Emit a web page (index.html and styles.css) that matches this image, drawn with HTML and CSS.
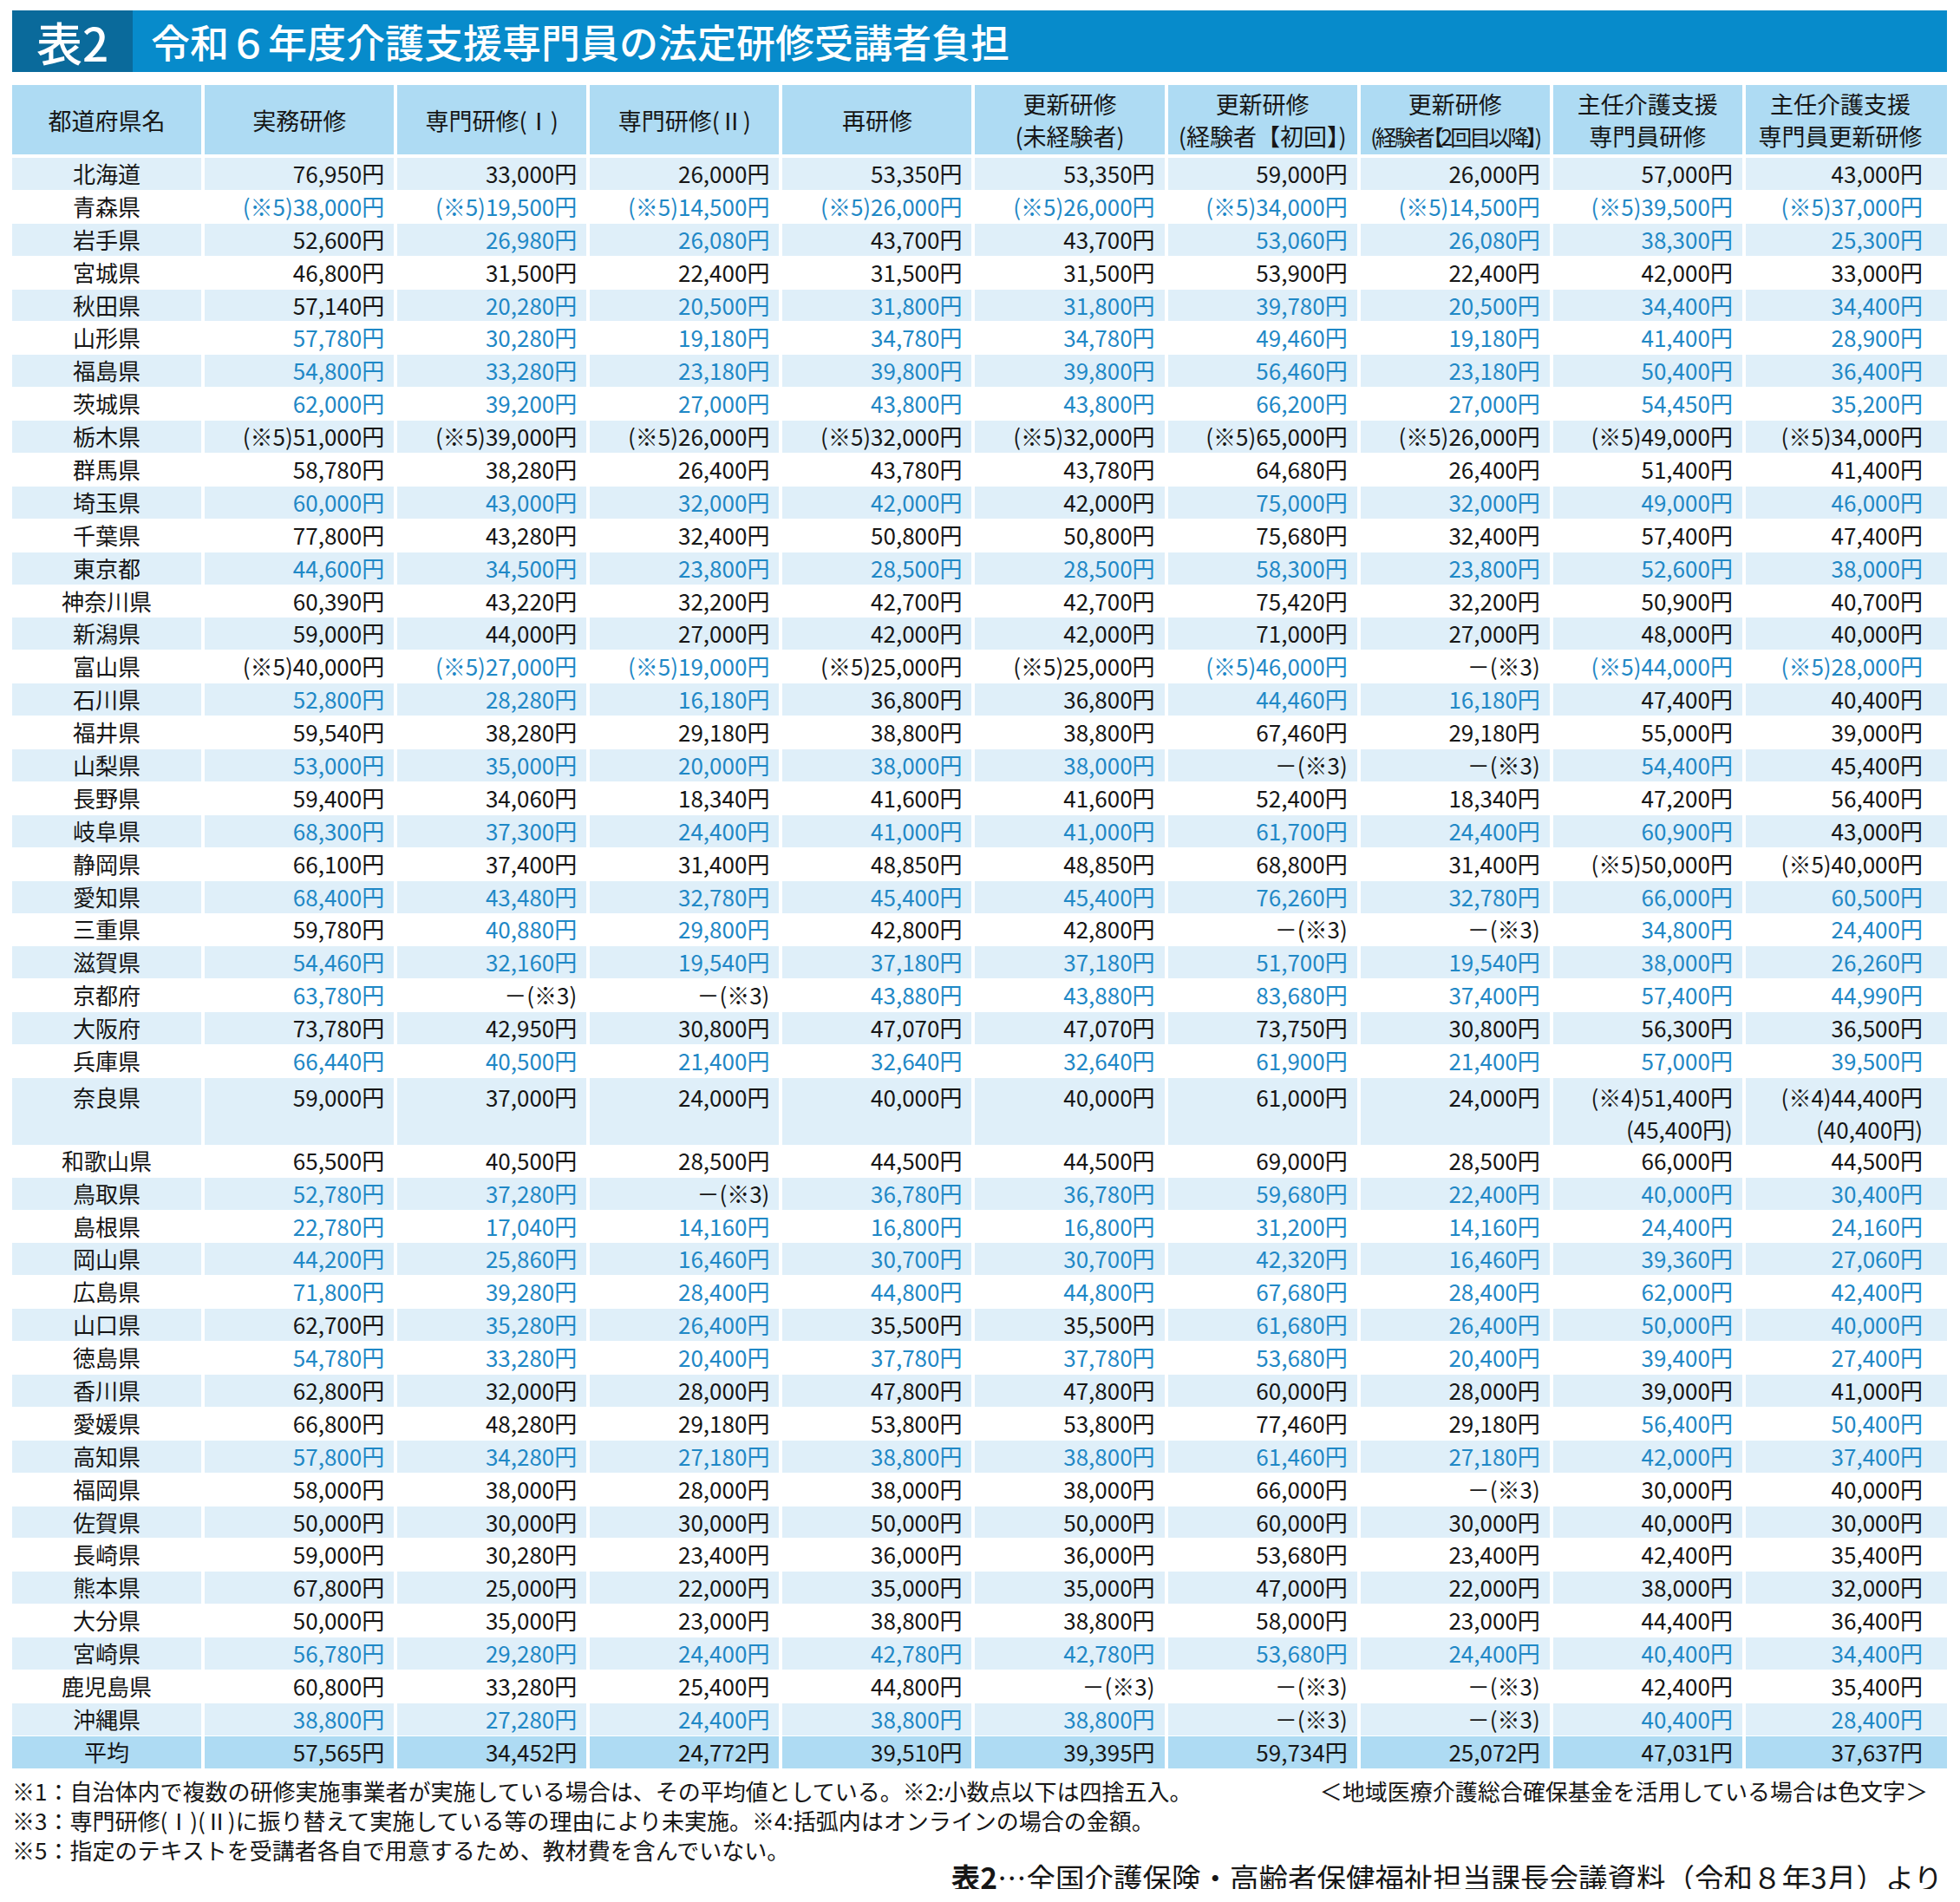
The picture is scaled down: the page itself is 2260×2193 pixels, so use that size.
FILE: index.html
```html
<!DOCTYPE html>
<html lang="ja">
<head>
<meta charset="utf-8">
<title>表2 令和６年度介護支援専門員の法定研修受講者負担</title>
<link rel="stylesheet" href="styles.css">
</head>
<body>
<div class="page">
  <div class="title">
    <div class="title-no">表2</div>
    <div class="title-text">令和６年度介護支援専門員の法定研修受講者負担</div>
  </div>

  <div class="table">
    <div class="hd">
      <div class="hc"><p>都道府県名</p></div>
      <div class="hc"><p>実務研修</p></div>
      <div class="hc"><p>専門研修(Ⅰ)</p></div>
      <div class="hc"><p>専門研修(Ⅱ)</p></div>
      <div class="hc"><p>再研修</p></div>
      <div class="hc"><p>更新研修<br>(未経験者)</p></div>
      <div class="hc"><p>更新研修<br>(経験者【初回】)</p></div>
      <div class="hc"><p>更新研修<br><span class="tight">(経験者【2回目以降】)</span></p></div>
      <div class="hc"><p>主任介護支援<br>専門員研修</p></div>
      <div class="hc"><p>主任介護支援<br>専門員更新研修</p></div>
    </div>

    <div class="r band"><span>北海道</span><span>76,950円</span><span>33,000円</span><span>26,000円</span><span>53,350円</span><span>53,350円</span><span>59,000円</span><span>26,000円</span><span>57,000円</span><span>43,000円</span></div>
    <div class="r blue"><span>青森県</span><span>(※5)38,000円</span><span>(※5)19,500円</span><span>(※5)14,500円</span><span>(※5)26,000円</span><span>(※5)26,000円</span><span>(※5)34,000円</span><span>(※5)14,500円</span><span>(※5)39,500円</span><span>(※5)37,000円</span></div>
    <div class="r band"><span>岩手県</span><span>52,600円</span><span class="b">26,980円</span><span class="b">26,080円</span><span>43,700円</span><span>43,700円</span><span class="b">53,060円</span><span class="b">26,080円</span><span class="b">38,300円</span><span class="b">25,300円</span></div>
    <div class="r"><span>宮城県</span><span>46,800円</span><span>31,500円</span><span>22,400円</span><span>31,500円</span><span>31,500円</span><span>53,900円</span><span>22,400円</span><span>42,000円</span><span>33,000円</span></div>
    <div class="r band"><span>秋田県</span><span>57,140円</span><span class="b">20,280円</span><span class="b">20,500円</span><span class="b">31,800円</span><span class="b">31,800円</span><span class="b">39,780円</span><span class="b">20,500円</span><span class="b">34,400円</span><span class="b">34,400円</span></div>
    <div class="r blue"><span>山形県</span><span>57,780円</span><span>30,280円</span><span>19,180円</span><span>34,780円</span><span>34,780円</span><span>49,460円</span><span>19,180円</span><span>41,400円</span><span>28,900円</span></div>
    <div class="r band blue"><span>福島県</span><span>54,800円</span><span>33,280円</span><span>23,180円</span><span>39,800円</span><span>39,800円</span><span>56,460円</span><span>23,180円</span><span>50,400円</span><span>36,400円</span></div>
    <div class="r blue"><span>茨城県</span><span>62,000円</span><span>39,200円</span><span>27,000円</span><span>43,800円</span><span>43,800円</span><span>66,200円</span><span>27,000円</span><span>54,450円</span><span>35,200円</span></div>
    <div class="r band"><span>栃木県</span><span>(※5)51,000円</span><span>(※5)39,000円</span><span>(※5)26,000円</span><span>(※5)32,000円</span><span>(※5)32,000円</span><span>(※5)65,000円</span><span>(※5)26,000円</span><span>(※5)49,000円</span><span>(※5)34,000円</span></div>
    <div class="r"><span>群馬県</span><span>58,780円</span><span>38,280円</span><span>26,400円</span><span>43,780円</span><span>43,780円</span><span>64,680円</span><span>26,400円</span><span>51,400円</span><span>41,400円</span></div>
    <div class="r band blue"><span>埼玉県</span><span>60,000円</span><span>43,000円</span><span>32,000円</span><span>42,000円</span><span class="k">42,000円</span><span>75,000円</span><span>32,000円</span><span>49,000円</span><span>46,000円</span></div>
    <div class="r"><span>千葉県</span><span>77,800円</span><span>43,280円</span><span>32,400円</span><span>50,800円</span><span>50,800円</span><span>75,680円</span><span>32,400円</span><span>57,400円</span><span>47,400円</span></div>
    <div class="r band blue"><span>東京都</span><span>44,600円</span><span>34,500円</span><span>23,800円</span><span>28,500円</span><span>28,500円</span><span>58,300円</span><span>23,800円</span><span>52,600円</span><span>38,000円</span></div>
    <div class="r"><span>神奈川県</span><span>60,390円</span><span>43,220円</span><span>32,200円</span><span>42,700円</span><span>42,700円</span><span>75,420円</span><span>32,200円</span><span>50,900円</span><span>40,700円</span></div>
    <div class="r band"><span>新潟県</span><span>59,000円</span><span>44,000円</span><span>27,000円</span><span>42,000円</span><span>42,000円</span><span>71,000円</span><span>27,000円</span><span>48,000円</span><span>40,000円</span></div>
    <div class="r"><span>富山県</span><span>(※5)40,000円</span><span class="b">(※5)27,000円</span><span class="b">(※5)19,000円</span><span>(※5)25,000円</span><span>(※5)25,000円</span><span class="b">(※5)46,000円</span><span>－(※3)</span><span class="b">(※5)44,000円</span><span class="b">(※5)28,000円</span></div>
    <div class="r band"><span>石川県</span><span class="b">52,800円</span><span class="b">28,280円</span><span class="b">16,180円</span><span>36,800円</span><span>36,800円</span><span class="b">44,460円</span><span class="b">16,180円</span><span>47,400円</span><span>40,400円</span></div>
    <div class="r"><span>福井県</span><span>59,540円</span><span>38,280円</span><span>29,180円</span><span>38,800円</span><span>38,800円</span><span>67,460円</span><span>29,180円</span><span>55,000円</span><span>39,000円</span></div>
    <div class="r band"><span>山梨県</span><span class="b">53,000円</span><span class="b">35,000円</span><span class="b">20,000円</span><span class="b">38,000円</span><span class="b">38,000円</span><span>－(※3)</span><span>－(※3)</span><span class="b">54,400円</span><span>45,400円</span></div>
    <div class="r"><span>長野県</span><span>59,400円</span><span>34,060円</span><span>18,340円</span><span>41,600円</span><span>41,600円</span><span>52,400円</span><span>18,340円</span><span>47,200円</span><span>56,400円</span></div>
    <div class="r band blue"><span>岐阜県</span><span>68,300円</span><span>37,300円</span><span>24,400円</span><span>41,000円</span><span>41,000円</span><span>61,700円</span><span>24,400円</span><span>60,900円</span><span class="k">43,000円</span></div>
    <div class="r"><span>静岡県</span><span>66,100円</span><span>37,400円</span><span>31,400円</span><span>48,850円</span><span>48,850円</span><span>68,800円</span><span>31,400円</span><span>(※5)50,000円</span><span>(※5)40,000円</span></div>
    <div class="r band blue"><span>愛知県</span><span>68,400円</span><span>43,480円</span><span>32,780円</span><span>45,400円</span><span>45,400円</span><span>76,260円</span><span>32,780円</span><span>66,000円</span><span>60,500円</span></div>
    <div class="r"><span>三重県</span><span>59,780円</span><span class="b">40,880円</span><span class="b">29,800円</span><span>42,800円</span><span>42,800円</span><span>－(※3)</span><span>－(※3)</span><span class="b">34,800円</span><span class="b">24,400円</span></div>
    <div class="r band blue"><span>滋賀県</span><span>54,460円</span><span>32,160円</span><span>19,540円</span><span>37,180円</span><span>37,180円</span><span>51,700円</span><span>19,540円</span><span>38,000円</span><span>26,260円</span></div>
    <div class="r blue"><span>京都府</span><span>63,780円</span><span class="k">－(※3)</span><span class="k">－(※3)</span><span>43,880円</span><span>43,880円</span><span>83,680円</span><span>37,400円</span><span>57,400円</span><span>44,990円</span></div>
    <div class="r band"><span>大阪府</span><span>73,780円</span><span>42,950円</span><span>30,800円</span><span>47,070円</span><span>47,070円</span><span>73,750円</span><span>30,800円</span><span>56,300円</span><span>36,500円</span></div>
    <div class="r blue"><span>兵庫県</span><span>66,440円</span><span>40,500円</span><span>21,400円</span><span>32,640円</span><span>32,640円</span><span>61,900円</span><span>21,400円</span><span>57,000円</span><span>39,500円</span></div>
    <div class="r band tall"><span>奈良県</span><span>59,000円</span><span>37,000円</span><span>24,000円</span><span>40,000円</span><span>40,000円</span><span>61,000円</span><span>24,000円</span><span>(※4)51,400円<br>(45,400円)</span><span>(※4)44,400円<br>(40,400円)</span></div>
    <div class="r"><span>和歌山県</span><span>65,500円</span><span>40,500円</span><span>28,500円</span><span>44,500円</span><span>44,500円</span><span>69,000円</span><span>28,500円</span><span>66,000円</span><span>44,500円</span></div>
    <div class="r band blue"><span>鳥取県</span><span>52,780円</span><span>37,280円</span><span class="k">－(※3)</span><span>36,780円</span><span>36,780円</span><span>59,680円</span><span>22,400円</span><span>40,000円</span><span>30,400円</span></div>
    <div class="r blue"><span>島根県</span><span>22,780円</span><span>17,040円</span><span>14,160円</span><span>16,800円</span><span>16,800円</span><span>31,200円</span><span>14,160円</span><span>24,400円</span><span>24,160円</span></div>
    <div class="r band blue"><span>岡山県</span><span>44,200円</span><span>25,860円</span><span>16,460円</span><span>30,700円</span><span>30,700円</span><span>42,320円</span><span>16,460円</span><span>39,360円</span><span>27,060円</span></div>
    <div class="r blue"><span>広島県</span><span>71,800円</span><span>39,280円</span><span>28,400円</span><span>44,800円</span><span>44,800円</span><span>67,680円</span><span>28,400円</span><span>62,000円</span><span>42,400円</span></div>
    <div class="r band"><span>山口県</span><span>62,700円</span><span class="b">35,280円</span><span class="b">26,400円</span><span>35,500円</span><span>35,500円</span><span class="b">61,680円</span><span class="b">26,400円</span><span class="b">50,000円</span><span class="b">40,000円</span></div>
    <div class="r blue"><span>徳島県</span><span>54,780円</span><span>33,280円</span><span>20,400円</span><span>37,780円</span><span>37,780円</span><span>53,680円</span><span>20,400円</span><span>39,400円</span><span>27,400円</span></div>
    <div class="r band"><span>香川県</span><span>62,800円</span><span>32,000円</span><span>28,000円</span><span>47,800円</span><span>47,800円</span><span>60,000円</span><span>28,000円</span><span>39,000円</span><span>41,000円</span></div>
    <div class="r"><span>愛媛県</span><span>66,800円</span><span>48,280円</span><span>29,180円</span><span>53,800円</span><span>53,800円</span><span>77,460円</span><span>29,180円</span><span class="b">56,400円</span><span class="b">50,400円</span></div>
    <div class="r band blue"><span>高知県</span><span>57,800円</span><span>34,280円</span><span>27,180円</span><span>38,800円</span><span>38,800円</span><span>61,460円</span><span>27,180円</span><span>42,000円</span><span>37,400円</span></div>
    <div class="r"><span>福岡県</span><span>58,000円</span><span>38,000円</span><span>28,000円</span><span>38,000円</span><span>38,000円</span><span>66,000円</span><span>－(※3)</span><span>30,000円</span><span>40,000円</span></div>
    <div class="r band"><span>佐賀県</span><span>50,000円</span><span>30,000円</span><span>30,000円</span><span>50,000円</span><span>50,000円</span><span>60,000円</span><span>30,000円</span><span>40,000円</span><span>30,000円</span></div>
    <div class="r"><span>長崎県</span><span>59,000円</span><span>30,280円</span><span>23,400円</span><span>36,000円</span><span>36,000円</span><span>53,680円</span><span>23,400円</span><span>42,400円</span><span>35,400円</span></div>
    <div class="r band"><span>熊本県</span><span>67,800円</span><span>25,000円</span><span>22,000円</span><span>35,000円</span><span>35,000円</span><span>47,000円</span><span>22,000円</span><span>38,000円</span><span>32,000円</span></div>
    <div class="r"><span>大分県</span><span>50,000円</span><span>35,000円</span><span>23,000円</span><span>38,800円</span><span>38,800円</span><span>58,000円</span><span>23,000円</span><span>44,400円</span><span>36,400円</span></div>
    <div class="r band blue"><span>宮崎県</span><span>56,780円</span><span>29,280円</span><span>24,400円</span><span>42,780円</span><span>42,780円</span><span>53,680円</span><span>24,400円</span><span>40,400円</span><span>34,400円</span></div>
    <div class="r"><span>鹿児島県</span><span>60,800円</span><span>33,280円</span><span>25,400円</span><span>44,800円</span><span>－(※3)</span><span>－(※3)</span><span>－(※3)</span><span>42,400円</span><span>35,400円</span></div>
    <div class="r band blue"><span>沖縄県</span><span>38,800円</span><span>27,280円</span><span>24,400円</span><span>38,800円</span><span>38,800円</span><span class="k">－(※3)</span><span class="k">－(※3)</span><span>40,400円</span><span>28,400円</span></div>
    <div class="r avg"><span>平均</span><span>57,565円</span><span>34,452円</span><span>24,772円</span><span>39,510円</span><span>39,395円</span><span>59,734円</span><span>25,072円</span><span>47,031円</span><span>37,637円</span></div>
  </div>

  <div class="notes">
    <div class="note-line">
      <span>※1：自治体内で複数の研修実施事業者が実施している場合は、その平均値としている。※2:小数点以下は四捨五入。</span>
      <span class="legend">＜地域医療介護総合確保基金を活用している場合は色文字＞</span>
    </div>
    <div class="note-line">※3：専門研修(Ⅰ)(Ⅱ)に振り替えて実施している等の理由により未実施。※4:括弧内はオンラインの場合の金額。</div>
    <div class="note-line">※5：指定のテキストを受講者各自で用意するため、教材費を含んでいない。</div>
  </div>

  <div class="source"><b>表2</b>…全国介護保険・高齢者保健福祉担当課長会議資料（令和８年3月）より</div>
</div>
</body>
</html>
```

FILE: styles.css
```css
* {
  box-sizing: border-box;
}

body {
  margin: 0;
  padding: 12px 15px 0 14px;
  background: #ffffff;
  color: #161616;
  font-family: "Noto Sans CJK JP", "Noto Sans", sans-serif;
}

.page {
  width: 2231px;
}

/* ---------- title bar ---------- */
.title {
  display: flex;
  height: 71px;
  background: #078bcb;
  color: #ffffff;
}

.title-no {
  width: 139px;
  background: #0a6a9b;
  display: flex;
  align-items: center;
  justify-content: center;
  font-size: 53px;
  font-weight: 500;
}

.title-text {
  display: flex;
  align-items: center;
  padding-left: 21px;
  font-size: 45px;
  font-weight: 500;
}

/* ---------- table ---------- */
.table {
  margin-top: 15px;
  display: flex;
  flex-direction: column;
  gap: 1px;
}

.hd,
.r {
  display: grid;
  grid-template-columns: repeat(9, minmax(0, 218fr)) minmax(0, 232fr);
  column-gap: 4px;
}

.hd {
  height: 80px;
  margin-bottom: 3px;
}

.hc {
  background: #aedbf3;
  display: flex;
  align-items: center;
  justify-content: center;
  overflow: hidden;
}

.hc p {
  margin: 0;
  text-align: center;
  font-size: 27px;
  line-height: 37px;
  white-space: nowrap;
}

.hc:last-child p {
  padding-right: 14px;
}

.hc .tight {
  font-size: 25px;
  font-feature-settings: "palt";
  letter-spacing: -3px;
}

.r {
  height: 36.9px;
}

.r span {
  font-size: 26px;
  line-height: 36.9px;
  text-align: right;
  padding-right: 11px;
  white-space: nowrap;
}

.r span:first-child {
  text-align: center;
  padding-right: 0;
}

.r span:last-child {
  padding-right: 28px;
}

.band span {
  background: #dfeff9;
}

.avg span {
  background: #aedbf3;
}

.tall {
  height: 75.8px;
}

.tall span {
  padding-top: 3px;
  line-height: 37px;
}

.blue span,
.r span.b {
  color: #1f88c6;
}

.blue span:first-child,
.r span.k {
  color: #161616;
}

/* ---------- notes ---------- */
.notes {
  margin-top: 9px;
  font-size: 26px;
  line-height: 34px;
}

.note-line {
  display: flex;
  justify-content: space-between;
  white-space: nowrap;
}

.legend {
  padding-right: 22px;
}

.source {
  text-align: right;
  padding-right: 5px;
  font-size: 33.5px;
  line-height: 28px;
  font-weight: 400;
  white-space: nowrap;
}

.source b {
  font-weight: 700;
}
```
